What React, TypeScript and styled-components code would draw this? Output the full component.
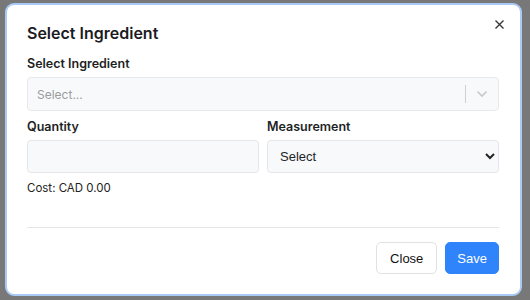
import React from 'react';
import styled, { createGlobalStyle } from 'styled-components';

const GlobalStyle = createGlobalStyle`
  html, body {
    margin: 0;
    padding: 0;
  }
  body {
    font-family: Inter, "Noto Sans", sans-serif;
    background: #777;
  }
`;

const Backdrop = styled.div`
  width: 530px;
  height: 300px;
  background: #787878;
  padding: 3px 0 0 5px;
  box-sizing: border-box;
`;

const Modal = styled.div`
  width: 517px;
  height: 293px;
  box-sizing: border-box;
  background: #fff;
  border: 2px solid #a9c9f7;
  border-radius: 9px;
  padding: 0 21px 0 20px;
  display: flex;
  flex-direction: column;
`;

const Header = styled.div`
  display: flex;
  align-items: center;
  justify-content: space-between;
  padding-top: 16px;
  height: 24px;
`;

const Title = styled.h2`
  margin: 0;
  font-size: 16px;
  font-weight: 600;
  line-height: 24px;
  color: #1b1b1f;
`;

const CloseX = styled.button`
  border: none;
  background: none;
  padding: 0;
  margin: -18px -7px 0 0;
  width: 14px;
  height: 14px;
  display: flex;
  align-items: center;
  justify-content: center;
  cursor: pointer;
`;

const Label = styled.label<{ $top?: number }>`
  display: block;
  margin-top: ${(p) => p.$top ?? 0}px;
  margin-bottom: 4px;
  font-size: 12.5px;
  font-weight: 600;
  line-height: 18px;
  color: #1d1f24;
`;

const Control = styled.div`
  height: 34px;
  box-sizing: border-box;
  background: #f8f9fa;
  border: 1px solid #e7e9ec;
  border-radius: 4px;
  display: flex;
  align-items: center;
  padding-left: 9px;
`;

const Placeholder = styled.span`
  flex: 1;
  font-size: 12px;
  color: #9a9ca0;
`;

const Separator = styled.span`
  width: 1px;
  height: 18px;
  background: #d0d0d0;
`;

const Indicator = styled.span`
  width: 32px;
  display: flex;
  align-items: center;
  justify-content: center;
`;

const Row = styled.div`
  display: grid;
  grid-template-columns: 1fr 1fr;
  gap: 8px;
  margin-top: 7px;
`;

const Field = styled.div`
  display: flex;
  flex-direction: column;
`;

const Input = styled.input`
  height: 33px;
  box-sizing: border-box;
  background: #f8f9fa;
  border: 1px solid #e3e6ea;
  border-radius: 4px;
  outline: none;
`;

const Select = styled.select`
  height: 33px;
  box-sizing: border-box;
  background: #f8f9fa;
  border: 1px solid #e3e6ea;
  border-radius: 4px;
  padding: 0 8px;
  font-family: "Liberation Sans", Arial, sans-serif;
  font-size: 13px;
  color: #212529;
  outline: none;
`;

const Cost = styled.div`
  margin-top: 6px;
  font-size: 11.5px;
  line-height: 18px;
  color: #222;
`;

const Divider = styled.hr`
  margin: 30px 0 0;
  border: none;
  border-top: 1px solid #e6e6e6;
`;

const Footer = styled.div`
  display: flex;
  justify-content: flex-end;
  gap: 8px;
  margin-top: 14px;
`;

const Button = styled.button<{ $primary?: boolean }>`
  height: 32px;
  box-sizing: border-box;
  padding: 0 ${(p) => (p.$primary ? 11 : 13)}px;
  border-radius: 5px;
  border: 1px solid ${(p) => (p.$primary ? '#2f84fb' : '#e2e2e2')};
  background: ${(p) => (p.$primary ? '#2f84fb' : '#fff')};
  color: ${(p) => (p.$primary ? '#fff' : '#111')};
  font-family: "Liberation Sans", Arial, sans-serif;
  font-size: 13px;
  cursor: pointer;
`;

const App: React.FC = () => {
  return (
    <>
      <GlobalStyle />
      <Backdrop>
        <Modal>
          <Header>
            <Title>Select Ingredient</Title>
            <CloseX aria-label="Close">
              <svg width="9" height="9" viewBox="0 0 9 9">
                <path d="M0.5 0.5 L8.5 8.5 M8.5 0.5 L0.5 8.5" stroke="#333" strokeWidth="1.3" />
              </svg>
            </CloseX>
          </Header>

          <Label $top={10}>Select Ingredient</Label>
          <Control>
            <Placeholder>Select...</Placeholder>
            <Separator />
            <Indicator>
              <svg width="12" height="8" viewBox="0 0 12 8">
                <path d="M1.5 1.5 L6 6 L10.5 1.5" stroke="#c8c8c8" strokeWidth="1.6" fill="none" />
              </svg>
            </Indicator>
          </Control>

          <Row>
            <Field>
              <Label>Quantity</Label>
              <Input type="number" />
            </Field>
            <Field>
              <Label>Measurement</Label>
              <Select defaultValue="">
                <option value="">Select</option>
                <option value="g">Grams</option>
                <option value="ml">Millilitres</option>
              </Select>
            </Field>
          </Row>

          <Cost>Cost: CAD 0.00</Cost>

          <Divider />

          <Footer>
            <Button>Close</Button>
            <Button $primary>Save</Button>
          </Footer>
        </Modal>
      </Backdrop>
    </>
  );
};

export default App;
